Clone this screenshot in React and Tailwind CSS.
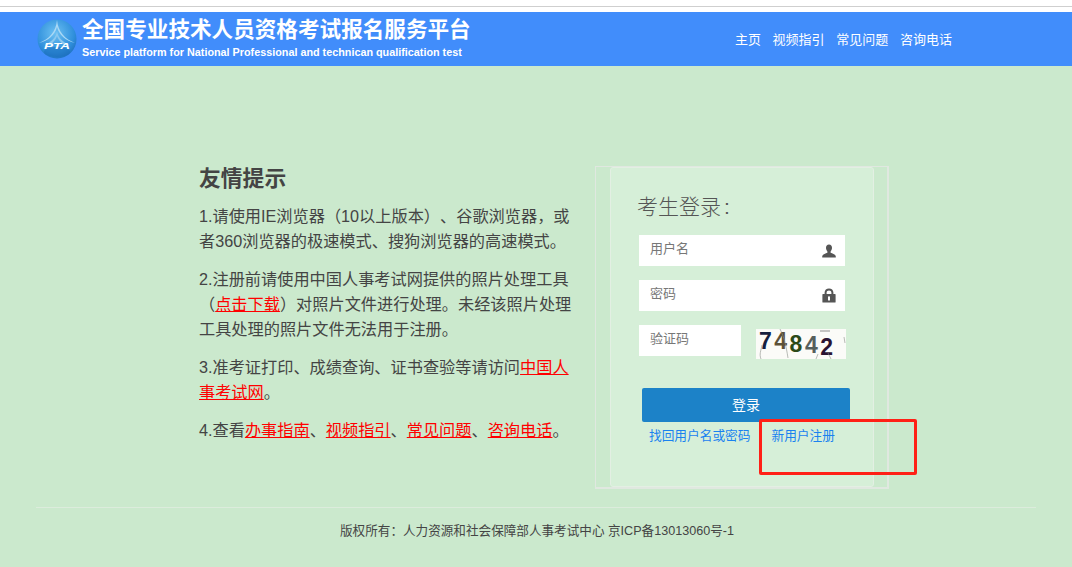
import React from 'react';

const font = { fontFamily: '"Liberation Sans", "Noto Sans CJK SC", sans-serif' };

function Logo() {
  return (
    <svg width="40" height="40" viewBox="0 0 40 40" className="shrink-0">
      <defs>
        <radialGradient id="ball" cx="45%" cy="35%" r="70%">
          <stop offset="0%" stopColor="#6cc0f2" />
          <stop offset="70%" stopColor="#2f8fdc" />
          <stop offset="100%" stopColor="#1c6dbb" />
        </radialGradient>
      </defs>
      <circle cx="20" cy="20" r="19.5" fill="url(#ball)" />
      <path d="M20 1 C19 13 12 20 2 24 C11 22 18 16 20 8 C22 16 29 22 38 24 C28 20 21 13 20 1Z" fill="#a9d8f5" />
      <path d="M20 12 C19 19 14 23 8 26 L13 26 C17 23 19 20 20 17 C21 20 23 23 27 26 L32 26 C26 23 21 19 20 12Z" fill="#8cc8ef" />
      <ellipse cx="20" cy="33" rx="13" ry="5" fill="#1c6dbb" opacity="0.5" />
      <text x="20" y="29.5" textAnchor="middle" fontSize="9" fontWeight="700" fontStyle="italic" fill="#ffffff" fontFamily="Liberation Sans, sans-serif" textLength="26" lengthAdjust="spacingAndGlyphs">PTA</text>
    </svg>
  );
}

function Field({ label, icon, className }) {
  return (
    <div className={`flex h-[31px] items-center justify-between bg-white pl-[11px] pr-[9px] text-[13px] text-[#777] ${className}`}>
      <span className="relative top-[-2px]">{label}</span>
      {icon}
    </div>
  );
}

function UserIcon() {
  return (
    <svg width="14" height="14" viewBox="0 0 14 14" fill="#555">
      <path d="M7 0.5C8.9 0.5 10 2 10 3.8C10 5.4 9.3 6.6 8.6 7.4L8.6 8.8C10.5 9.6 13.6 10.2 13.8 12.6L13.8 13.5L0.2 13.5L0.2 12.6C0.4 10.2 3.5 9.6 5.4 8.8L5.4 7.4C4.7 6.6 4 5.4 4 3.8C4 2 5.1 0.5 7 0.5Z" />
    </svg>
  );
}

function LockIcon() {
  return (
    <svg width="14" height="15" viewBox="0 0 14 15" fill="#555">
      <path d="M1 6H2.6V4.6C2.6 2.1 4.5 0.5 7 0.5C9.5 0.5 11.4 2.1 11.4 4.6V6H13C13.4 6 13.6 6.3 13.6 6.6V14C13.6 14.4 13.4 14.6 13 14.6H1C0.6 14.6 0.4 14.4 0.4 14V6.6C0.4 6.3 0.6 6 1 6ZM4.6 6H9.4V4.6C9.4 3.2 8.4 2.4 7 2.4C5.6 2.4 4.6 3.2 4.6 4.6V6ZM6 9V12.4H8V9C8 8.4 7.5 8.2 7 8.2C6.5 8.2 6 8.4 6 9Z" fillRule="evenodd" />
    </svg>
  );
}

function Captcha() {
  const digits = [
    ['7', 'text-[#14203f]', 'top-[-3px]'],
    ['4', 'text-[#5c5138]', 'top-[-3px]'],
    ['8', 'text-[#2c4a18]', 'top-[0px]'],
    ['4', 'text-[#56605c]', 'top-[1px]'],
    ['2', 'text-[#2a1433]', 'top-[3px]'],
  ];
  return (
    <div className="relative ml-[15px] mt-[4px] flex h-[30px] w-[90px] items-center gap-[2.5px] bg-[#fbfbf8] pl-[3px] text-[23px] font-bold leading-none">
      {digits.map(([d, color, top], i) => (
        <span key={i} className={`relative ${color} ${top}`}>{d}</span>
      ))}
      <svg className="absolute inset-0" width="90" height="30" viewBox="0 0 90 30" fill="none" stroke="#8a8f88" strokeWidth="0.6">
        <path d="M24 0C28 8 30 16 32 29" />
        <path d="M6 16C5 22 3 25 5 30" />
        <path d="M88 8L89 14" />
        <path d="M64 2H74" stroke="#444" />
        <path d="M62 25L60 30M72 24L75 30" />
      </svg>
    </div>
  );
}

export default function App() {
  return (
    <div className="min-h-[567px] overflow-hidden bg-[#cbe9cd] text-[#444] [text-spacing-trim:space-all]" style={font}>
      <div className="h-[12px] border-t-[6px] border-white bg-white">
        <div className="h-px bg-[#cfcfcf]" />
      </div>

      <header className="flex h-[54px] items-center justify-between bg-[#418dfb] pl-[37px] pr-[120px] text-white">
        <div className="flex items-center gap-[5px]">
          <Logo />
          <div className="mt-[-4px]">
            <div className="text-[21.6px] font-bold leading-[30px]">全国专业技术人员资格考试报名服务平台</div>
            <div className="text-[10.8px] font-bold leading-[14px]">Service platform for National Professional and technican qualification test</div>
          </div>
        </div>
        <nav className="mt-[2px] flex gap-[11.7px] text-[13px]">
          <a>主页</a>
          <a>视频指引</a>
          <a>常见问题</a>
          <a>咨询电话</a>
        </nav>
      </header>

      <main className="mt-[100px] flex pl-[199px]">
        <section className="w-[376px] text-[16.2px] leading-[25.2px]">
          <h2 className="mb-[10px] mt-[-2px] text-[21.8px] font-bold leading-[30px]">友情提示</h2>
          <p className="mb-[12.6px]">1.请使用IE浏览器（10以上版本）、谷歌浏览器，或者360浏览器的极速模式、搜狗浏览器的高速模式。</p>
          <p className="mb-[12.6px]">2.注册前请使用中国人事考试网提供的照片处理工具（<a className="text-[#f00] underline">点击下载</a>）对照片文件进行处理。未经该照片处理工具处理的照片文件无法用于注册。</p>
          <p className="mb-[12.6px]">3.准考证打印、成绩查询、证书查验等请访问<a className="text-[#f00] underline">中国人事考试网</a>。</p>
          <p>4.查看<a className="text-[#f00] underline">办事指南</a>、<a className="text-[#f00] underline">视频指引</a>、<a className="text-[#f00] underline">常见问题</a>、<a className="text-[#f00] underline">咨询电话</a>。</p>
        </section>

        <section className="relative ml-[20px] h-[323px] w-[294px] border-b-2 border-r-2 border-l border-t border-[#e0e8e0] px-[14px]">
          <div className="h-full w-[264px] rounded-[3px] border border-[#e3efe3] bg-[#d6efd8] pl-[28px] pr-[28px] pt-[23px]">
            <h3 className="ml-[-2px] text-[21px] font-light leading-[32px] text-[#555]">考生登录<span className="ml-[3px]">:</span></h3>
            <Field label="用户名" icon={<UserIcon />} className="mt-[12px] w-[206px]" />
            <Field label="密码" icon={<LockIcon />} className="mt-[14px] w-[206px]" />
            <div className="mt-[14px] flex w-[210px] items-start">
              <Field label="验证码" className="w-[102px]" />
              <Captcha />
            </div>
            <button className="ml-[3px] mt-[29px] block h-[34px] w-[208px] rounded-[2px] bg-[#1c82c8] text-[14px] text-white">登录</button>
            <div className="ml-[10px] mt-[5px] flex gap-[21px] whitespace-nowrap text-[12.7px] leading-[18px] text-[#1a82f0]">
              <a>找回用户名或密码</a>
              <a>新用户注册</a>
            </div>
          </div>
          <div className="absolute left-[163px] top-[252px] h-[56px] w-[158px] rounded-[2px] border-[3px] border-[#ff2016]" />
        </section>
      </main>

      <footer className="mx-[36px] mt-[18px] w-[1000px] border-t border-[#dcecdc] pl-[2px] pt-[13px] text-center text-[12.6px] leading-[20px] text-[#444]">
        版权所有：人力资源和社会保障部人事考试中心 京ICP备13013060号-1
      </footer>
    </div>
  );
}
